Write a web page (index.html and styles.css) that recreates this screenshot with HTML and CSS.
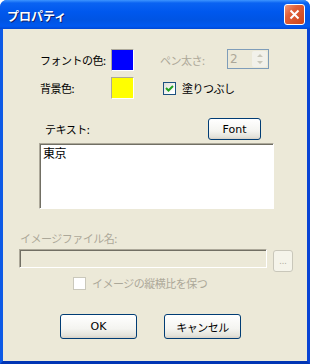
FILE: index.html
```html
<!DOCTYPE html>
<html lang="ja">
<head>
    <meta charset="UTF-8">
    <title>プロパティ</title>
    <link rel="stylesheet" href="styles.css">
</head>
<body>
    <div class="window">
        <div class="titlebar">
            <span class="title">プロパティ</span>
            <span class="close">
                <svg width="11" height="11" viewBox="0 0 11 11"><path d="M1.5 1.5 L9.5 9.5 M9.5 1.5 L1.5 9.5" stroke="#fff" stroke-width="2"/></svg>
            </span>
        </div>
        <div class="body">
            <div class="row row-font">
                <span class="lbl">フォントの色:</span>
                <span class="swatch swatch-blue"></span>
                <span class="lbl lbl-pen disabled">ペン太さ:</span>
                <div class="spin">
                    <span class="spin-val">2</span>
                    <span class="spin-btn">
                        <svg width="12" height="16" viewBox="0 0 12 16"><path d="M3 6 L6 3 L9 6 Z M3 10 L6 13 L9 10 Z" fill="#c9c7ba"/></svg>
                    </span>
                </div>
            </div>
            <div class="row row-back">
                <span class="lbl">背景色:</span>
                <span class="swatch swatch-yellow"></span>
                <label class="check check-fill">
                    <span class="box">
                        <svg width="11" height="11" viewBox="0 0 11 11"><path d="M2 5 L4.5 7.5 L9 3" fill="none" stroke="#21a121" stroke-width="2"/></svg>
                    </span>
                    塗りつぶし
                </label>
            </div>
            <div class="text-head">
                <span class="lbl-text">テキスト:</span>
                <span class="btn btn-font">Font</span>
            </div>
            <div class="textbox">東京</div>
            <div class="file-label disabled">イメージファイル名:</div>
            <div class="file-row">
                <div class="file-input"></div>
                <span class="btn btn-dots">...</span>
            </div>
            <label class="check check-ratio disabled">
                <span class="box box-off"></span>
                イメージの縦横比を保つ
            </label>
            <div class="actions">
                <span class="btn btn-ok">OK</span>
                <span class="btn btn-cancel">キャンセル</span>
            </div>
        </div>
    </div>
</body>
</html>
```

FILE: styles.css
```css
body {
    margin: 0;
    font-family: "Noto Sans CJK JP", "Noto Sans", sans-serif;
    font-size: 11px;
    letter-spacing: -0.5px;
    color: #000;
}

.window {
    width: 310px;
    height: 364px;
    display: flex;
    flex-direction: column;
    background: #0a4fd9;
    border-radius: 7px 7px 0 0;
    overflow: hidden;
}

.titlebar {
    height: 29px;
    flex: none;
    display: flex;
    align-items: center;
    justify-content: space-between;
    padding: 0 5px 0 7px;
    background: linear-gradient(to bottom, #3d95ff 0, #0a63f2 3px, #0058ee 40%, #0054e3 70%, #0059f0 90%, #0048d6 100%);
}

.title {
    color: #fff;
    font-weight: bold;
    font-size: 12px;
    letter-spacing: 0;
    text-shadow: 1px 1px #0a1e6e;
    margin-top: 1px;
}

.close {
    width: 21px;
    height: 21px;
    box-sizing: border-box;
    border: 1px solid #fff;
    border-radius: 3px;
    background: linear-gradient(135deg, #f09a7c 0, #e0603a 35%, #cc4419 100%);
    display: flex;
    align-items: center;
    justify-content: center;
}

.body {
    flex: 1;
    background: #ece9d8;
    border: 3px solid #0843d4;
    border-top: none;
    border-left-color: #0d5ae6;
    border-bottom-color: #0135b4;
}

.disabled {
    color: #aca899;
}

.row {
    display: flex;
    align-items: center;
    margin-left: 37px;
}

.row-font {
    margin-top: 20px;
    align-items: flex-start;
}

.row-font .lbl {
    line-height: 22px;
}

.row-back {
    margin-top: 6px;
}

.lbl {
    width: 71px;
}

.lbl-pen {
    width: 67px;
    margin-left: 26px;
}

.swatch {
    width: 23px;
    height: 22px;
    box-sizing: border-box;
    border: 1px solid #aca899;
    border-right-color: #fff;
    border-bottom-color: #fff;
}

.swatch-blue {
    background: #0000ff;
}

.swatch-yellow {
    background: #ffff00;
}

.spin {
    width: 42px;
    height: 20px;
    box-sizing: border-box;
    border: 1px solid #7f9db9;
    display: flex;
    justify-content: space-between;
}

.spin-val {
    color: #aca899;
    font-family: "DejaVu Sans", sans-serif;
    font-size: 12px;
    padding-left: 2px;
    line-height: 18px;
}

.spin-btn {
    width: 15px;
    margin: 1px;
    background: #f2f1ea;
    border-radius: 2px;
    display: flex;
    align-items: center;
    justify-content: center;
}

.check {
    display: flex;
    align-items: center;
    gap: 6px;
}

.check-fill {
    margin-left: 29px;
}

.box {
    width: 13px;
    height: 13px;
    box-sizing: border-box;
    border: 1px solid #1c5180;
    background: linear-gradient(135deg, #dcdcd7 0, #fff 80%);
    display: flex;
    align-items: center;
    justify-content: center;
}

.box-off {
    border-color: #cac8bb;
    background: #fff;
}

.text-head {
    display: flex;
    align-items: center;
    margin: 19px 0 0 42px;
}

.lbl-text {
    width: 163px;
}

.btn {
    box-sizing: border-box;
    display: flex;
    align-items: center;
    justify-content: center;
    border: 1px solid #003c74;
    border-radius: 3px;
    background: linear-gradient(to bottom, #fff 0, #f4f4f0 60%, #e3e2da 90%, #d6d0c5 100%);
}

.btn-font {
    width: 53px;
    height: 22px;
    font-family: "DejaVu Sans", sans-serif;
    letter-spacing: 0;
}

.textbox {
    margin: 3px 0 0 36px;
    width: 235px;
    height: 66px;
    box-sizing: border-box;
    border: 1px solid #fff;
    border-top-color: #aca899;
    border-left-color: #aca899;
    box-shadow: inset 1px 1px #716f64;
    background: #fff;
    padding: 2px 3px;
    font-size: 12px;
    line-height: 14px;
}

.file-label {
    margin: 22px 0 0 17px;
    line-height: 14px;
}

.file-row {
    display: flex;
    align-items: flex-start;
    margin: 4px 0 0 16px;
}

.file-input {
    width: 248px;
    height: 19px;
    box-sizing: border-box;
    border: 1px solid #fff;
    border-top-color: #aca899;
    border-left-color: #aca899;
    box-shadow: inset 1px 1px #716f64;
}

.btn-dots {
    width: 20px;
    height: 22px;
    margin: 1px 0 0 6px;
    border-color: #c9c7ba;
    background: #f5f4ea;
    color: #aca899;
    font-family: "DejaVu Sans", sans-serif;
    font-size: 8px;
    letter-spacing: 0;
}

.check-ratio {
    margin: 3px 0 0 70px;
}

.actions {
    display: flex;
    margin: 23px 0 0 57px;
    gap: 27px;
}

.btn-ok,
.btn-cancel {
    width: 77px;
    height: 25px;
}

.btn-ok {
    font-family: "DejaVu Sans", sans-serif;
    letter-spacing: 0;
}
```
